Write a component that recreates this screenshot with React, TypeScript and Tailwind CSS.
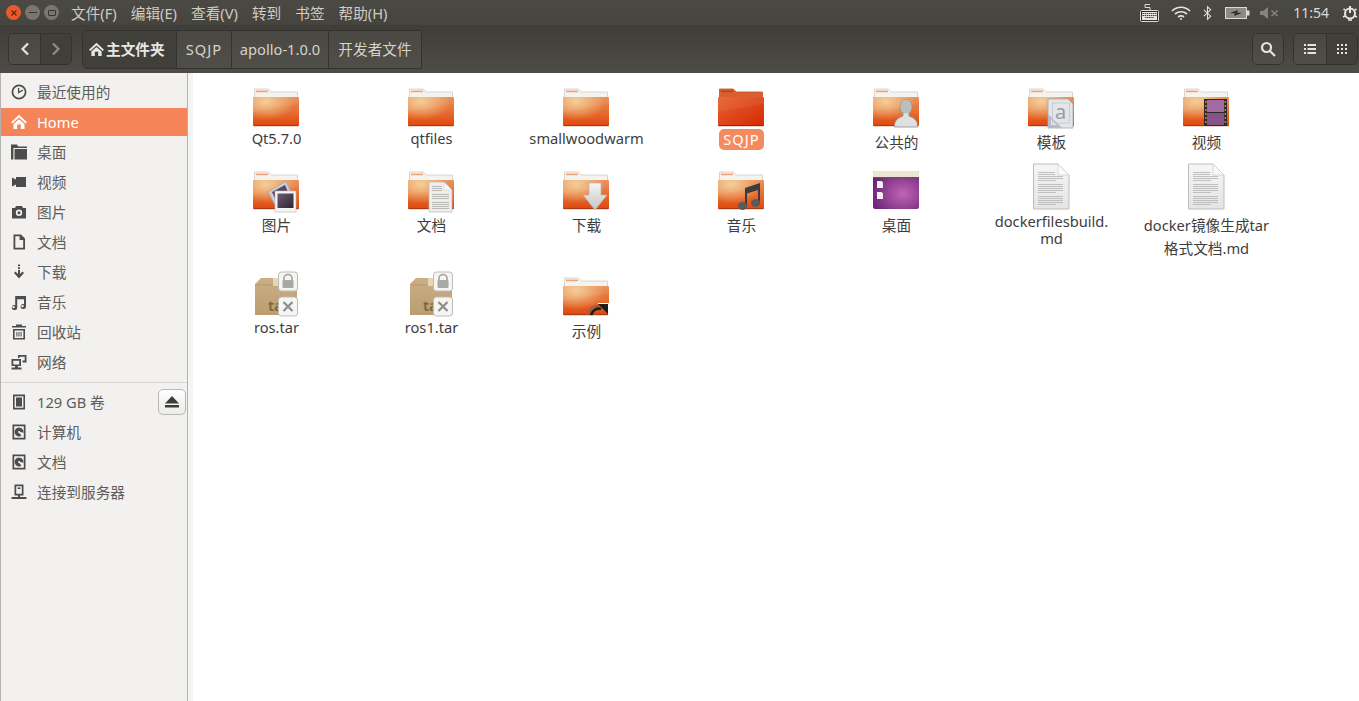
import type { ReactNode } from "react";

const MENUS = ["文件(F)", "编辑(E)", "查看(V)", "转到", "书签", "帮助(H)"];

function Glyph({ children, className = "" }: { children: ReactNode; className?: string }) {
  return (
    <svg viewBox="0 0 16 16" className={`h-4 w-4 shrink-0 fill-current ${className}`}>
      {children}
    </svg>
  );
}

const HomeGlyph = (
  <path d="M8 0.8 L16 8.2 L14.6 9.6 L8 3.6 L1.4 9.6 L0 8.2 Z M8 5.2 L13.5 10 V15 H9.8 V10.5 H6.2 V15 H2.5 V10 Z" />
);

const sideIcons: Record<string, ReactNode> = {
  recent: (
    <>
      <circle cx="8" cy="8" r="6.6" fill="none" stroke="currentColor" strokeWidth="1.7" />
      <path d="M7.6 4 V8.6 L12 6" fill="none" stroke="currentColor" strokeWidth="1.3" />
    </>
  ),
  home: HomeGlyph,
  desktop: <path d="M0 0.5 H6 L7.2 2.5 H16 V4 H2.4 V15.5 H0 Z M3.5 5 H16 V15.5 H3.5 Z" />,
  video: <path d="M5 3 H15 V13 H5 V10.5 L1 12.5 V3.5 L5 5.5 Z" />,
  camera: (
    <path
      d="M5 2 H11 L12 4 H15 V14.5 H1 V4 H4 Z M8 5.5 A3.2 3.2 0 1 0 8 11.9 A3.2 3.2 0 1 0 8 5.5 Z M8 7.2 A1.5 1.5 0 1 1 8 10.2 A1.5 1.5 0 1 1 8 7.2 Z"
      fillRule="evenodd"
    />
  ),
  doc: <path d="M2.5 0.5 H10 L14 4.5 V15.5 H2.5 Z M4.3 2.2 V13.8 H12.2 V6 H8.6 V2.2 Z" fillRule="evenodd" />,
  download: (
    <path d="M7 0.5 H9 V2.3 H7 Z M7 3.3 H9 V5 H7 Z M7 6 H9 V10 L11.5 7.6 L13 9 L8 14.5 L3 9 L4.5 7.6 L7 10 Z" />
  ),
  music: (
    <path
      d="M4.2 2 H15 V12.5 A2.7 2.5 0 1 1 13 10.2 V5.2 H6.2 V13.5 A2.7 2.5 0 1 1 4.2 11.2 Z M2.5 12 A1.2 1.1 0 1 0 2.6 14.2 A1.2 1.1 0 1 0 2.5 12 Z M11.5 11 A1.2 1.1 0 1 0 11.6 13.2 A1.2 1.1 0 1 0 11.5 11 Z"
      fillRule="evenodd"
    />
  ),
  trash: (
    <path
      d="M5 0.5 H11 V2 H15 V3.6 H1 V2 H5 Z M2 5 H14 V15.5 H2 Z M3.6 6.5 V14 H12.4 V6.5 Z M5.4 8 H6.4 V12.5 H5.4 Z M7.5 8 H8.5 V12.5 H7.5 Z M9.6 8 H10.6 V12.5 H9.6 Z"
      fillRule="evenodd"
    />
  ),
  network: (
    <path
      d="M0.5 5 H10 V12 H7 V13.5 H10.5 V15.5 H0.5 V13.5 H4 V12 H0.5 Z M2.3 6.7 V10.4 H8.2 V6.7 Z M7 1 H15.5 V8.5 H11.5 V6.5 H13.7 V2.7 H8.6 V4 H7 Z"
      fillRule="evenodd"
    />
  ),
  chip: (
    <path
      d="M2 0.5 H14 V15.5 H2 Z M3.6 2.2 V13.8 H12.4 V2.2 Z M5 3.6 H11 V12.4 H5 Z"
      fillRule="evenodd"
    />
  ),
  disk: (
    <path
      d="M1.5 0.5 H14.5 V15.5 H1.5 Z M3.2 2.2 V13.8 H12.8 V2.2 Z M8 3.5 A4.5 4.5 0 1 0 10.5 11.8 L8.6 9.2 A1.1 1.1 0 1 1 9.3 7.9 L12.4 8.7 A4.5 4.5 0 0 0 8 3.5 Z"
      fillRule="evenodd"
    />
  ),
  server: (
    <path
      d="M3.5 0.5 H12.5 V11.5 H9 V13 H15.5 V15 H0.5 V13 H7 V11.5 H3.5 Z M5.2 2.2 V9.8 H10.8 V2.2 Z M6.6 3.5 H9.4 V5 H6.6 Z"
      fillRule="evenodd"
    />
  ),
};

const PLACES = [
  ["recent", "最近使用的"],
  ["home", "Home"],
  ["desktop", "桌面"],
  ["video", "视频"],
  ["camera", "图片"],
  ["doc", "文档"],
  ["download", "下载"],
  ["music", "音乐"],
  ["trash", "回收站"],
  ["network", "网络"],
];

const DEVICES = [
  ["chip", "129 GB 卷"],
  ["disk", "计算机"],
  ["disk", "文档"],
  ["server", "连接到服务器"],
];

function SideRow({ icon, label, active, eject }: { icon: string; label: string; active?: boolean; eject?: boolean }) {
  return (
    <div
      className={`mb-[2px] flex h-[28px] items-center pl-[10px] ${active ? "bg-[#f58558] text-white" : "text-[#5d5d5b]"}`}
    >
      <Glyph className={active ? "text-white" : "text-[#4c4c4c]"}>{sideIcons[icon]}</Glyph>
      <span className="ml-[10px]">{label}</span>
      {eject && (
        <div className="ml-auto mr-[1px] flex h-[26px] w-[28px] items-center justify-center rounded-[5px] border border-[#b9b7b3] bg-gradient-to-b from-white to-[#ecebe9]">
          <svg viewBox="0 0 14 12" className="h-3 w-[14px] fill-[#3c3c3c]">
            <path d="M7 0 L14 7.5 H0 Z M0 9 H14 V11.5 H0 Z" />
          </svg>
        </div>
      )}
    </div>
  );
}

function Folder({ children, selected }: { children?: ReactNode; selected?: boolean }) {
  return (
    <svg viewBox="0 0 48 45" className="h-[45px] w-12 overflow-visible">
      <path
        d="M1.5 4 H15 L18.5 7 H44.5 V14 H1.5 Z"
        fill={selected ? "#d8602f" : "#f5f3f0"}
        stroke={selected ? "#c54f22" : "#cfccc7"}
        strokeWidth="0.8"
      />
      <rect x="3" y="5.6" width="12" height="1.6" fill={selected ? "#b8431a" : "#f4a171"} />
      <rect x="0" y="12" width="46" height="29" rx="1" fill={selected ? "url(#folderSel)" : "url(#folderBody)"} />
      {!selected && <rect x="0" y="12" width="46" height="29" rx="1" fill="url(#folderGlow)" />}
      <path d="M0 27 L46 19 V12 H0 Z" fill="#ffffff" opacity="0.06" />
      <rect x="0.5" y="40" width="45" height="1.2" fill={selected ? "#9c2506" : "#a83b12"} />
      {children}
    </svg>
  );
}

function DocSheet() {
  const lines = [4, 6, 8, 10, 12, 16, 18, 20, 22, 24, 28, 30, 32, 34, 36];
  return (
    <svg viewBox="0 0 48 45" className="h-[45px] w-12 overflow-visible">
      <path d="M5.5 -4 H30 L41 7 V41 H5.5 Z" fill="url(#docFill)" stroke="#bdbdbd" />
      <path d="M30 -4 V7 H41 Z" fill="#fafafa" stroke="#c8c8c8" strokeWidth="0.6" />
      {lines.map((y) => (
        <rect key={y} x="10" y={y} width={y < 7 ? 17 : y % 12 === 0 ? 18 : 25} height="0.8" fill="#b4b4b4" />
      ))}
    </svg>
  );
}

function TarBox() {
  return (
    <svg viewBox="0 0 48 45" className="h-[45px] w-12 overflow-visible">
      <path d="M2 10 L8 4 H40 L44 10 V41 H2 Z" fill="url(#boxFill)" />
      <path d="M2 11 H44" stroke="#a98a5e" strokeWidth="0.5" />
      <rect x="20" y="4" width="5" height="8" fill="#e6d6b8" />
      <text x="15" y="37" fontSize="15" fontWeight="600" fill="#7d6540">
        ta
      </text>
      <rect x="25.5" y="-2" width="19" height="19" rx="3" fill="#f5f5f3" stroke="#bdbbb6" />
      <path d="M31 6 V4.5 A4 4 0 0 1 39 4.5 V6" fill="none" stroke="#a3a3a0" strokeWidth="1.6" />
      <rect x="29.5" y="6" width="11" height="8" rx="1" fill="#a8a8a4" />
      <rect x="25.5" y="23" width="19" height="19" rx="3" fill="#f5f5f3" stroke="#bdbbb6" />
      <path d="M30.5 28 L39.5 37 M39.5 28 L30.5 37" stroke="#8d8d8a" strokeWidth="2.2" />
    </svg>
  );
}

const overlays: Record<string, ReactNode> = {
  person: (
    <>
      <ellipse cx="33" cy="22" rx="6" ry="7.5" fill="#c9c9c7" stroke="#8d8d8a" strokeWidth="0.8" />
      <path
        d="M21.5 42 C21 35 25 33 30 31 L30 27 H36 L36 31 C41 33 45 35 44.5 42 Z"
        fill="#e0e0de"
        stroke="#8d8d8a"
        strokeWidth="0.8"
      />
      <ellipse cx="33" cy="21.5" rx="5.4" ry="7" fill="#bdbdbb" />
    </>
  ),
  template: (
    <>
      <path d="M20 14 H40 L45 19 V43 H20 Z" fill="#e4e5e8" stroke="#a5a8b0" strokeWidth="0.8" />
      <path d="M20 29 V43 H34 Z" fill="#b6bac4" />
      <path d="M23 34 V40 H29 Z" fill="#e4e5e8" />
      <rect x="24.5" y="18" width="17" height="20" fill="none" stroke="#b5b8c0" strokeWidth="0.6" />
      <text x="27" y="34" fontSize="20" fill="#9a9ca4">
        a
      </text>
    </>
  ),
  film: (
    <>
      <rect x="21" y="14" width="23" height="27" fill="#2b2a28" />
      <rect x="24" y="15" width="17" height="12" fill="#a06aa2" />
      <rect x="24" y="28" width="17" height="12" fill="#85528a" />
      {[16, 20, 24, 28, 32, 36].map((y) => (
        <g key={y}>
          <rect x="22" y={y} width="1.6" height="2" fill="#c4763f" />
          <rect x="41.5" y={y} width="1.6" height="2" fill="#c4763f" />
        </g>
      ))}
    </>
  ),
  photos: (
    <>
      <path d="M15 24 L33 13 L41 31 L24 41 Z" fill="#cfcbd2" stroke="#9a98a0" strokeWidth="0.6" />
      <path d="M19 24 L32 17 L37 29 L25 37 Z" fill="#574763" />
      <rect x="22" y="23" width="21" height="21" fill="#f4f4f4" stroke="#b9b9b9" strokeWidth="0.6" />
      <rect x="24.5" y="25.5" width="16" height="14.5" fill="url(#photoFill)" />
    </>
  ),
  doc: (
    <>
      <path d="M21 14 H36 L44 22 V44 H21 Z" fill="#efeeec" stroke="#bdbcb9" strokeWidth="0.7" />
      <path d="M36 14 V22 H44 Z" fill="#fafafa" stroke="#c9c9c9" strokeWidth="0.5" />
      {[18, 20, 22, 26, 28, 30, 34, 36, 38, 40].map((y) => (
        <rect key={y} x="24" y={y} width={y < 24 ? 10 : 17} height="0.7" fill="#a3a3a3" />
      ))}
    </>
  ),
  arrow: (
    <path
      d="M26 15 H38 V27 H44 L32 42 L20 27 H26 Z"
      fill="url(#arrowFill)"
      stroke="#b5b5b3"
      strokeWidth="0.7"
    />
  ),
  music: (
    <>
      <path d="M27 20 L42 15 V36 H40 V22 L29 25.5 V39 H27 Z" fill="#3c3c3c" />
      <ellipse cx="24.5" cy="38" rx="4.5" ry="4" fill="#5a5a58" />
      <ellipse cx="37.5" cy="35" rx="4.5" ry="4" fill="#5a5a58" />
    </>
  ),
  link: (
    <>
      <path d="M25 41 C27 34 32 32 37 33" stroke="#a85a3a" strokeWidth="3.4" fill="none" />
      <path d="M28 41 C30 36 34 34 38 35" stroke="#1c1c1c" strokeWidth="2.8" fill="none" />
      <path d="M35 30 H45 V40 Z" fill="#1c1c1c" />
      <rect x="45" y="29" width="1" height="12" fill="#ffffff" />
      <rect x="35" y="29" width="11" height="1" fill="#ffffff" />
    </>
  ),
};

function DesktopIcon() {
  return (
    <svg viewBox="0 0 48 45" className="h-[45px] w-12 overflow-visible">
      <rect x="0" y="3" width="46" height="38" rx="2" fill="url(#desktopFill)" />
      <rect x="0" y="3" width="46" height="7" rx="1.5" fill="#ebe7d4" />
      <rect x="0" y="9" width="46" height="1.2" fill="#5e5b3c" />
      <path d="M4 13 H8.5 L10 14.5 V20 H4 Z M4 24 H8.5 L10 25.5 V31 H4 Z" fill="#f2eef2" />
    </svg>
  );
}

type FileItem = { name: string[]; art: ReactNode; cjk?: boolean; selected?: boolean };

const FILES: FileItem[] = [
  { name: ["Qt5.7.0"], art: <Folder /> },
  { name: ["qtfiles"], art: <Folder /> },
  { name: ["smallwoodwarm"], art: <Folder /> },
  { name: ["SQJP"], art: <Folder selected />, selected: true },
  { name: ["公共的"], art: <Folder>{overlays.person}</Folder>, cjk: true },
  { name: ["模板"], art: <Folder>{overlays.template}</Folder>, cjk: true },
  { name: ["视频"], art: <Folder>{overlays.film}</Folder>, cjk: true },
  { name: ["图片"], art: <Folder>{overlays.photos}</Folder>, cjk: true },
  { name: ["文档"], art: <Folder>{overlays.doc}</Folder>, cjk: true },
  { name: ["下载"], art: <Folder>{overlays.arrow}</Folder>, cjk: true },
  { name: ["音乐"], art: <Folder>{overlays.music}</Folder>, cjk: true },
  { name: ["桌面"], art: <DesktopIcon />, cjk: true },
  { name: ["dockerfilesbuild.", "md"], art: <DocSheet /> },
  { name: ["docker镜像生成tar", "格式文档.md"], art: <DocSheet />, cjk: true },
  { name: ["ros.tar"], art: <TarBox /> },
  { name: ["ros1.tar"], art: <TarBox /> },
  { name: ["示例"], art: <Folder>{overlays.link}</Folder>, cjk: true },
];

function FileCell({ item }: { item: FileItem }) {
  return (
    <div className="flex flex-col items-center">
      {item.art}
      <div
        className={`text-center ${item.cjk ? "mt-px leading-[23px]" : "leading-[17px]"} ${
          item.selected
            ? "-mt-px rounded-[5px] bg-[#f58a5f] px-[4px] py-[2px] tracking-[1px] text-white"
            : "text-[#3d3d3d]"
        }`}
      >
        {item.name.map((line) => (
          <div key={line}>{line}</div>
        ))}
      </div>
    </div>
  );
}

function NavButton({ className, children }: { className: string; children: ReactNode }) {
  return <div className={`flex h-full items-center justify-center ${className}`}>{children}</div>;
}

const crumbClass =
  "flex h-full items-center justify-center border-l border-[#33322e] bg-gradient-to-b from-[#4a4843] to-[#504e48] text-[#d6d3cb]";
const lightButton = "bg-gradient-to-b from-[#494742] to-[#504e48]";

function StatusBar() {
  return (
    <div className="flex items-center">
      <svg viewBox="0 0 19 19" className="h-[19px] w-[19px] fill-none stroke-[#dcdad5]">
        <path d="M10 7 V4.5 H5 V1.5 H10" strokeWidth="1" />
        <rect x="0.5" y="7.5" width="18" height="11" rx="1" fill="#2f2e2b" />
        <rect x="2" y="9" width="15" height="8" fill="#e6e5e1" stroke="none" />
        <path d="M2.5 10.5 H16.5 M2.5 12.5 H16.5 M5 14.5 H14" stroke="#2f2e2b" strokeWidth="0.9" strokeDasharray="1.5 0.6" />
      </svg>
      <svg viewBox="0 0 20 14" className="ml-[12px] h-[14px] w-5 fill-none stroke-[#e4e2dd]" strokeWidth="1.7">
        <path d="M1 5 C6 0 14 0 19 5 M4 8 C7.5 5 12.5 5 16 8 M7 11 C8.8 9.6 11.2 9.6 13 11" />
        <circle cx="10" cy="13" r="1" fill="#e4e2dd" stroke="none" />
      </svg>
      <svg viewBox="0 0 10 16" className="ml-[12px] h-4 w-[9px] fill-none stroke-[#e4e2dd]" strokeWidth="1.2">
        <path d="M1 4.5 L8.5 11.5 L5 15 V1 L8.5 4.5 L1 11.5" />
      </svg>
      <svg viewBox="0 0 25 12" className="ml-[13px] h-3 w-[25px]">
        <rect x="0.5" y="0.5" width="21" height="11" fill="#8d8b84" stroke="#dcdad5" />
        <rect x="22" y="3.5" width="2.5" height="5" fill="#dcdad5" />
        <path d="M5 6 L13 3 L12 5.5 L17 6 L9 9 L10 6.5 Z" fill="#2f2e2b" />
      </svg>
      <svg viewBox="0 0 19 12" className="ml-[10px] h-3 w-[19px] fill-[#85837c]">
        <path d="M0 4 H3 L8 0 V12 L3 8 H0 Z" />
        <path d="M11.5 3.5 L17.5 9 M17.5 3.5 L11.5 9" stroke="#85837c" strokeWidth="1.6" />
      </svg>
      <span className="ml-[14px] text-[14px] text-[#dcdad5]">11:54</span>
      <svg viewBox="0 0 16 16" className="ml-[13px] h-4 w-4 fill-none stroke-[#e8e6e1]" strokeWidth="2">
        <path d="M8 1 V8" />
        <circle cx="8" cy="8.5" r="5" />
        <path d="M8 1 V3 M1.5 4 L3 5 M14.5 4 L13 5 M1 12 L3 11 M15 12 L13 11 M6 15 H10" strokeWidth="1.6" />
      </svg>
    </div>
  );
}

export default function App() {
  return (
    <div className="flex h-screen w-full flex-col overflow-hidden bg-white text-[14.67px] [font-family:'Noto_Sans','Noto_Sans_CJK_SC',sans-serif]">
      <svg className="h-0 w-0 shrink-0">
        <defs>
          <linearGradient id="folderBody" x1="0" y1="0" x2="0" y2="1">
            <stop offset="0" stopColor="#e98a50" />
            <stop offset="0.5" stopColor="#e56f33" />
            <stop offset="1" stopColor="#e0470e" />
          </linearGradient>
          <radialGradient id="folderGlow" cx="0.28" cy="0.15" r="0.65">
            <stop offset="0" stopColor="#f5cf96" stopOpacity="0.95" />
            <stop offset="1" stopColor="#f5cf96" stopOpacity="0" />
          </radialGradient>
          <linearGradient id="folderSel" x1="0" y1="0" x2="1" y2="1">
            <stop offset="0" stopColor="#e8622f" />
            <stop offset="1" stopColor="#d42a05" />
          </linearGradient>
          <linearGradient id="docFill" x1="0" y1="0" x2="0" y2="1">
            <stop offset="0" stopColor="#f6f6f6" />
            <stop offset="1" stopColor="#e4e4e4" />
          </linearGradient>
          <linearGradient id="boxFill" x1="0" y1="0" x2="0" y2="1">
            <stop offset="0" stopColor="#cbae84" />
            <stop offset="1" stopColor="#bb9d70" />
          </linearGradient>
          <linearGradient id="photoFill" x1="0" y1="0" x2="1" y2="1">
            <stop offset="0" stopColor="#6e5a74" />
            <stop offset="1" stopColor="#2d2630" />
          </linearGradient>
          <linearGradient id="arrowFill" x1="0" y1="0" x2="0" y2="1">
            <stop offset="0" stopColor="#f5f5f4" />
            <stop offset="1" stopColor="#c4c4c2" />
          </linearGradient>
          <radialGradient id="desktopFill" cx="0.65" cy="0.6" r="0.7">
            <stop offset="0" stopColor="#c065b5" />
            <stop offset="1" stopColor="#6c2278" />
          </radialGradient>
        </defs>
      </svg>

      {/* menu bar */}
      <div className="flex h-[25px] shrink-0 items-center bg-gradient-to-b from-[#4b4944] to-[#45443e] pl-[6px] pr-[1px]">
        <div className="flex items-center gap-[4px]">
          <div className="flex h-[15px] w-[15px] items-center justify-center rounded-full bg-[#e8592b] text-[#70240c]">
            <svg viewBox="0 0 8 8" className="h-2 w-2 stroke-current" strokeWidth="1.3">
              <path d="M1.5 1.5 L6.5 6.5 M6.5 1.5 L1.5 6.5" />
            </svg>
          </div>
          <div className="flex h-[15px] w-[15px] items-center justify-center rounded-full bg-[#78766f]">
            <div className="h-px w-2 bg-[#35342f]" />
          </div>
          <div className="flex h-[15px] w-[15px] items-center justify-center rounded-full bg-[#78766f]">
            <div className="h-[6px] w-2 rounded-[1px] border border-[#35342f]" />
          </div>
        </div>
        <div className="ml-[12px] flex gap-[14px] text-[#cfccc3]">
          {MENUS.map((m) => (
            <span key={m}>{m}</span>
          ))}
        </div>
        <div className="ml-auto">
          <StatusBar />
        </div>
      </div>

      {/* toolbar */}
      <div className="flex h-[48px] shrink-0 items-center bg-gradient-to-b from-[#3e3d38] to-[#4e4c46] pl-2 pr-px">
        <div className="flex h-8 w-16 overflow-hidden rounded-[5px] border border-[#33322e]">
          <NavButton className={`w-[31px] ${lightButton}`}>
            <svg viewBox="0 0 10 14" className="h-[14px] w-[10px] fill-none stroke-[#e6e4df]" strokeWidth="2.2">
              <path d="M8 1.5 L2.5 7 L8 12.5" />
            </svg>
          </NavButton>
          <NavButton className="flex-1 border-l border-[#33322e] bg-[#403f3a]">
            <svg viewBox="0 0 10 14" className="h-[14px] w-[10px] fill-none stroke-[#8e8c85]" strokeWidth="2.2">
              <path d="M2 1.5 L7.5 7 L2 12.5" />
            </svg>
          </NavButton>
        </div>

        <div className="ml-[10px] flex h-[39px] overflow-hidden rounded-l-[5px] border border-[#33322e]">
          <div className="flex h-full w-[93px] items-center gap-[2px] bg-[#403f3a] pl-[6px] font-bold text-[#e8e6e1]">
            <Glyph className="h-[15px] w-[15px]">{HomeGlyph}</Glyph>
            <span>主文件夹</span>
          </div>
          <div className={`${crumbClass} w-[55px] tracking-[1px]`}>SQJP</div>
          <div className={`${crumbClass} w-[97px]`}>apollo-1.0.0</div>
          <div className={`${crumbClass} w-[93px]`}>开发者文件</div>
        </div>

        <div className={`ml-auto flex h-8 w-8 items-center justify-center rounded-[5px] border border-[#33322e] ${lightButton}`}>
          <svg viewBox="0 0 16 16" className="h-4 w-4 fill-none stroke-[#e6e4df]" strokeWidth="2.2">
            <circle cx="6.5" cy="6.5" r="4.5" />
            <path d="M10 10 L15 15" />
          </svg>
        </div>
        <div className="ml-[9px] flex h-8 w-[65px] overflow-hidden rounded-[5px] border border-[#33322e]">
          <NavButton className={`w-[32px] ${lightButton}`}>
            <svg viewBox="0 0 12 10" className="h-[10px] w-3 fill-[#e6e4df]">
              <path d="M0 0 H2 V2 H0 Z M3.5 0 H12 V2 H3.5 Z M0 4 H2 V6 H0 Z M3.5 4 H12 V6 H3.5 Z M0 8 H2 V10 H0 Z M3.5 8 H12 V10 H3.5 Z" />
            </svg>
          </NavButton>
          <NavButton className="flex-1 border-l border-[#33322e] bg-[#403f3a]">
            <svg viewBox="0 0 10 10" className="h-[10px] w-[10px] fill-[#e6e4df]">
              <path d="M0 0 H2 V2 H0 Z M4 0 H6 V2 H4 Z M8 0 H10 V2 H8 Z M0 4 H2 V6 H0 Z M4 4 H6 V6 H4 Z M8 4 H10 V6 H8 Z M0 8 H2 V10 H0 Z M4 8 H6 V10 H4 Z M8 8 H10 V10 H8 Z" />
            </svg>
          </NavButton>
        </div>
      </div>

      <div className="flex min-h-0 flex-1">
        {/* sidebar */}
        <aside className="w-[188px] shrink-0 border-x border-[#b5b3af] bg-[#f2f1f0] pt-[5px]">
          {PLACES.map(([icon, label]) => (
            <SideRow key={label} icon={icon} label={label} active={label === "Home"} />
          ))}
          <div className="mb-[5px] mt-[6px] h-px bg-[#d8d6d3]" />
          {DEVICES.map(([icon, label], i) => (
            <SideRow key={icon + label} icon={icon} label={label} eject={i === 0} />
          ))}
        </aside>
        <div className="w-[5px] shrink-0 bg-[#f5f5f4]" />

        {/* file grid */}
        <main className="min-w-0 flex-1 pl-[6px] pt-[12px]">
          <div className="grid grid-cols-[repeat(7,155px)] grid-rows-[83px_106px_83px]">
            {FILES.map((item) => (
              <FileCell key={item.name.join("")} item={item} />
            ))}
          </div>
        </main>
      </div>
    </div>
  );
}
